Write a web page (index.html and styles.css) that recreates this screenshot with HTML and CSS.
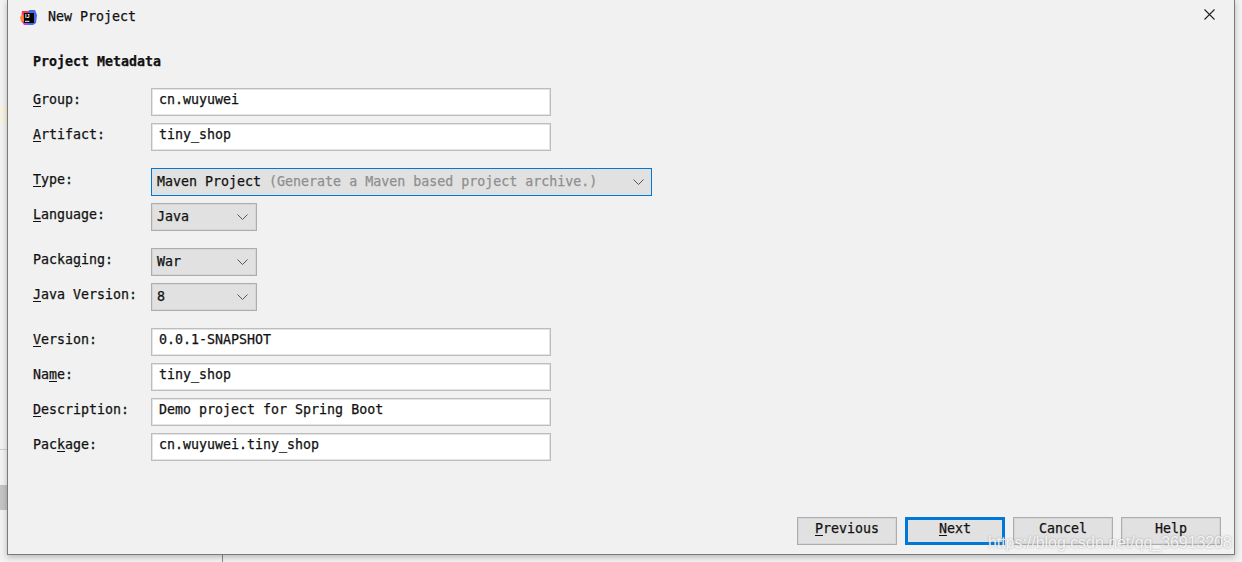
FILE: index.html
```html
<!DOCTYPE html>
<html lang="en">
<head>
  <meta charset="UTF-8" />
  <title>New Project</title>
  <link rel="stylesheet" href="styles.css">
</head>
<body>
  <!-- bits of the IDE showing behind the dialog -->
  <div class="ide-hilite"></div>
  <div class="ide-line"></div>
  <div class="ide-tab"></div>
  <div class="ide-divider"></div>

  <div class="dialog">
    <div class="title-bar">
      <svg class="app-icon" width="18" height="18" viewBox="0 -2 18 18">
        <path d="M2 1h7l1 3-7 9-2-3z" fill="#fc3158"/>
        <path d="M9 0h6l2 5-1 8-3 2h-6l-2-2z" fill="#3f6ee8"/>
        <path d="M0 7l3-3 1 7-3 1z" fill="#fb8b2c"/>
        <path d="M2 12l5-1 1 4-4 0z" fill="#c641d8"/>
        <rect x="4" y="3" width="10" height="10" fill="#000"/>
        <text x="5" y="8.4" class="icon-text">IJ</text>
        <rect x="5" y="10.8" width="4.5" height="1" fill="#fff"/>
      </svg>
      <span class="title-text">New Project</span>
      <svg class="close-icon" width="11" height="11" viewBox="0 0 11 11">
        <path d="M.5.5l10 10M10.5.5l-10 10" stroke="#222" stroke-width="1.1" fill="none"/>
      </svg>
    </div>

    <div class="content">
      <h2 class="section-title">Project Metadata</h2>

      <div class="form-group">
        <div class="form-row">
          <label class="form-label"><u>G</u>roup:</label>
          <div class="text-field">cn.wuyuwei</div>
        </div>
        <div class="form-row">
          <label class="form-label"><u>A</u>rtifact:</label>
          <div class="text-field">tiny_shop</div>
        </div>
      </div>

      <div class="form-group">
        <div class="form-row">
          <label class="form-label"><u>T</u>ype:</label>
          <div class="combo combo-wide">
            <span>Maven Project <span class="hint">(Generate a Maven based project archive.)</span></span>
            <svg class="chevron" width="11" height="6" viewBox="0 0 11 6"><path d="M.5.5l5 5 5-5" stroke="#555" fill="none"/></svg>
          </div>
        </div>
        <div class="form-row">
          <label class="form-label"><u>L</u>anguage:</label>
          <div class="combo">
            <span>Java</span>
            <svg class="chevron" width="11" height="6" viewBox="0 0 11 6"><path d="M.5.5l5 5 5-5" stroke="#555" fill="none"/></svg>
          </div>
        </div>
      </div>

      <div class="form-group">
        <div class="form-row">
          <label class="form-label">Packa<u>g</u>ing:</label>
          <div class="combo">
            <span>War</span>
            <svg class="chevron" width="11" height="6" viewBox="0 0 11 6"><path d="M.5.5l5 5 5-5" stroke="#555" fill="none"/></svg>
          </div>
        </div>
        <div class="form-row">
          <label class="form-label"><u>J</u>ava Version:</label>
          <div class="combo">
            <span>8</span>
            <svg class="chevron" width="11" height="6" viewBox="0 0 11 6"><path d="M.5.5l5 5 5-5" stroke="#555" fill="none"/></svg>
          </div>
        </div>
      </div>

      <div class="form-group">
        <div class="form-row">
          <label class="form-label"><u>V</u>ersion:</label>
          <div class="text-field">0.0.1-SNAPSHOT</div>
        </div>
        <div class="form-row">
          <label class="form-label">Na<u>m</u>e:</label>
          <div class="text-field">tiny_shop</div>
        </div>
        <div class="form-row">
          <label class="form-label"><u>D</u>escription:</label>
          <div class="text-field">Demo project for Spring Boot</div>
        </div>
        <div class="form-row">
          <label class="form-label">Pac<u>k</u>age:</label>
          <div class="text-field">cn.wuyuwei.tiny_shop</div>
        </div>
      </div>
    </div>

    <div class="button-bar">
      <button class="btn"><u>P</u>revious</button>
      <button class="btn btn-default"><u>N</u>ext</button>
      <button class="btn">Cancel</button>
      <button class="btn">Help</button>
    </div>
  </div>

  <div class="watermark">https://blog.csdn.net/qq_36913208</div>
</body>
</html>
```

FILE: styles.css
```css
* {
  box-sizing: border-box;
}

html, body {
  margin: 0;
  height: 100%;
}

body {
  position: relative;
  overflow: hidden;
  background-color: #f2f2f2;
  font-family: 'DejaVu Sans Mono', monospace;
  font-size: 13.3px;
  color: #111;
  -webkit-text-stroke: 0.25px currentColor;
}

/* IDE behind the dialog */
.ide-hilite {
  position: absolute;
  left: 0;
  top: 106px;
  width: 8px;
  height: 18px;
  background-color: #f7f3e2;
}

.ide-line {
  position: absolute;
  left: 0;
  top: 449px;
  width: 8px;
  height: 1px;
  background-color: #cfcfcf;
}

.ide-tab {
  position: absolute;
  left: 0;
  top: 485px;
  width: 8px;
  height: 25px;
  background-color: #c4c4c4;
}

.ide-divider {
  position: absolute;
  left: 222px;
  top: 555px;
  width: 1px;
  height: 7px;
  background-color: #8a8a8a;
}

.dialog {
  position: absolute;
  left: 7px;
  top: 0;
  width: 1228px;
  height: 555px;
  display: flex;
  flex-direction: column;
  background-color: #f1f1f1;
  border: 1px solid #7a7a7a;
  border-top: none;
  box-shadow: 0 2px 6px rgba(0, 0, 0, 0.25);
}

.title-bar {
  height: 33px;
  flex: none;
  display: flex;
  align-items: center;
  padding: 0 19px 0 12px;
}

.app-icon {
  flex: none;
  margin-right: 10px;
}

.icon-text {
  font-family: 'Liberation Sans', sans-serif;
  font-size: 5.5px;
  font-weight: 700;
  fill: #fff;
  -webkit-text-stroke: 0;
}

.title-text {
  flex: 1;
}

.close-icon {
  margin-top: -5px;
}

.content {
  flex: 1;
  padding: 0 25px;
}

.section-title {
  margin: 0;
  height: 55px;
  padding-top: 21px;
  font-size: 13.3px;
  line-height: 16px;
  font-weight: 700;
}

.form-group {
  display: flex;
  flex-direction: column;
  gap: 7px;
  margin-bottom: 17px;
}

.form-row {
  display: grid;
  grid-template-columns: 118px 1fr;
  align-items: center;
  height: 28px;
}

.form-label {
  margin-top: -5px;
}

.form-label u,
.btn u {
  text-underline-offset: 2px;
}

.text-field {
  width: 400px;
  height: 28px;
  line-height: 22px;
  padding: 0 7px;
  background-color: #fff;
  border: 1px solid #bdbdbd;
  box-shadow: inset 0 0 0 1px #e4e4e4;
}

.combo {
  width: 106px;
  height: 28px;
  display: flex;
  align-items: center;
  justify-content: space-between;
  padding: 0 8px 2px 5px;
  background-color: #e1e1e1;
  border: 1px solid #adadad;
  box-shadow: inset 0 0 0 1px #d6d6d6;
}

.combo span {
  white-space: pre;
}

.combo-wide {
  width: 501px;
  border-color: #0078d7;
  box-shadow: none;
  padding-right: 7px;
}

.hint {
  color: #8f8f8f;
}

.chevron {
  flex: none;
  margin-top: 2px;
}

.button-bar {
  flex: none;
  display: flex;
  justify-content: flex-end;
  gap: 8px;
  padding: 0 13px 9px 0;
}

.btn {
  width: 100px;
  height: 28px;
  padding: 0 0 5px;
  font-family: inherit;
  font-size: inherit;
  color: #111;
  background-color: #e1e1e1;
  border: 1px solid #adadad;
  box-shadow: inset 0 0 0 1px #d6d6d6;
}

.btn-default {
  border: 3px solid #0078d7;
  box-shadow: none;
}

.watermark {
  position: absolute;
  left: 988px;
  top: 534px;
  font-family: 'Liberation Sans', sans-serif;
  font-size: 15.9px;
  color: rgba(255, 255, 255, 0.85);
  text-shadow: 0 0 2px rgba(110, 110, 110, 0.6);
  white-space: nowrap;
  -webkit-text-stroke: 0;
}
```
